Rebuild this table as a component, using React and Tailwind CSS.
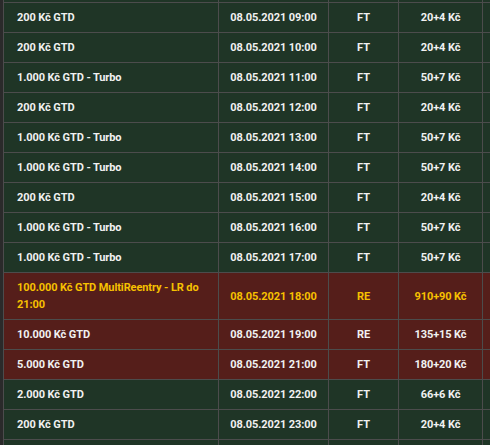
import React from "react";

const rows = [
  { n: "", d: "", t: "", p: "" },
  { n: "200 Kč GTD", d: "08.05.2021 09:00", t: "FT", p: "20+4 Kč" },
  { n: "200 Kč GTD", d: "08.05.2021 10:00", t: "FT", p: "20+4 Kč" },
  { n: "1.000 Kč GTD - Turbo", d: "08.05.2021 11:00", t: "FT", p: "50+7 Kč" },
  { n: "200 Kč GTD", d: "08.05.2021 12:00", t: "FT", p: "20+4 Kč" },
  { n: "1.000 Kč GTD - Turbo", d: "08.05.2021 13:00", t: "FT", p: "50+7 Kč" },
  { n: "1.000 Kč GTD - Turbo", d: "08.05.2021 14:00", t: "FT", p: "50+7 Kč" },
  { n: "200 Kč GTD", d: "08.05.2021 15:00", t: "FT", p: "20+4 Kč" },
  { n: "1.000 Kč GTD - Turbo", d: "08.05.2021 16:00", t: "FT", p: "50+7 Kč" },
  { n: "1.000 Kč GTD - Turbo", d: "08.05.2021 17:00", t: "FT", p: "50+7 Kč" },
  { n: "100.000 Kč GTD MultiReentry - LR do 21:00", d: "08.05.2021 18:00", t: "RE", p: "910+90 Kč", red: true, hl: true },
  { n: "10.000 Kč GTD", d: "08.05.2021 19:00", t: "RE", p: "135+15 Kč", red: true },
  { n: "5.000 Kč GTD", d: "08.05.2021 21:00", t: "FT", p: "180+20 Kč", red: true },
  { n: "2.000 Kč GTD", d: "08.05.2021 22:00", t: "FT", p: "66+6 Kč" },
  { n: "200 Kč GTD", d: "08.05.2021 23:00", t: "FT", p: "20+4 Kč" },
  { n: "", d: "", t: "", p: "" },
];

function Row({ r }) {
  const bg = r.red ? "bg-[#551e1a]" : "bg-[#1f3526]";
  const fg = r.hl ? "text-[#f7c100]" : "text-[#f1f1f1]";
  const cell = "border-l border-t border-[#4c4c4c] flex items-center py-[6px] leading-[17px] min-h-[30px]";
  return (
    <div className={`grid grid-cols-[215px_110px_70px_84px_100px] ${bg} ${fg}`}>
      <div className={`${cell} pl-[13px] pr-[13px]`}>{r.n}</div>
      <div className={`${cell} justify-center`}>{r.d}</div>
      <div className={`${cell} justify-center`}>{r.t}</div>
      <div className={`${cell} justify-center`}>{r.p}</div>
      <div className={`${cell} justify-center`}></div>
    </div>
  );
}

export default function App() {
  return (
    <div
      className="w-[490px] h-[445px] overflow-hidden bg-[#2a2a2a] pl-[3px] text-[11px] font-bold tracking-[-0.1px]"
      style={{ fontFamily: "Roboto, 'Noto Sans', sans-serif" }}
    >
      <div className="w-[579px] -mt-[28px]">
        {rows.map((r, i) => (
          <Row key={i} r={r} />
        ))}
      </div>
    </div>
  );
}
